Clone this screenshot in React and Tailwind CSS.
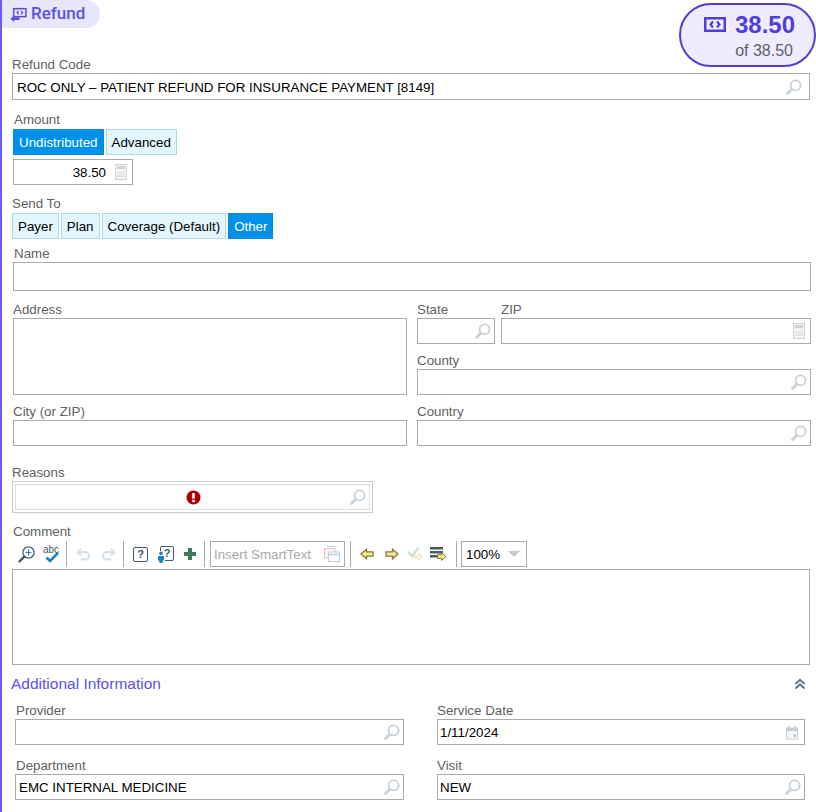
const SearchIcon = () => (
  <svg width="16" height="16" viewBox="0 0 16 16" fill="none" className="shrink-0">
    <circle cx="9.6" cy="6.4" r="5" stroke="#c9d1d8" strokeWidth="1.8" />
    <path d="M5.8 10.2 L1.6 14.4" stroke="#c9d1d8" strokeWidth="2.8" strokeLinecap="round" />
  </svg>
)

const CalcIcon = () => (
  <svg width="12" height="16" viewBox="0 0 12 16" className="shrink-0">
    <rect x="0.5" y="0.5" width="11" height="15" fill="#f4f5f6" stroke="#cfd3d6" />
    <rect x="2" y="2" width="8" height="3" fill="#cfd3d6" />
    <path d="M2.5 8.5h7M2.5 10.5h7M2.5 12.5h7" stroke="#c2c7cb" strokeDasharray="1 1" />
  </svg>
)

const CalendarIcon = () => (
  <svg width="14" height="15" viewBox="0 0 14 15" className="shrink-0">
    <rect x="1.5" y="3" width="11" height="11" fill="#f4f6f7" stroke="#c6cfd6" />
    <rect x="1" y="3" width="12" height="3" fill="#c6cfd6" />
    <rect x="3" y="1" width="1.5" height="2" fill="#c6cfd6" />
    <rect x="9.5" y="1" width="1.5" height="2" fill="#c6cfd6" />
    <rect x="8.5" y="9.5" width="2.5" height="2.5" fill="#b3bec7" />
  </svg>
)

const Label = ({ className = '', children }) => (
  <div className={`-mb-px pt-px text-[13.33px] leading-4 text-[#616161] ${className}`}>{children}</div>
)

const Input = ({ value, icon, className = '' }) => (
  <div className={`flex h-[27px] items-center justify-between border border-[#aaaaaa] bg-white pl-[3px] pr-[7px] text-[13.33px] text-black ${className}`}>
    <span className="pt-[2px]">{value}</span>
    {icon === 'search' && <SearchIcon />}
    {icon === 'calc' && <CalcIcon />}
    {icon === 'date' && <CalendarIcon />}
  </div>
)

const Toggle = ({ active, children }) => (
  <div
    className={`flex h-[26px] items-center border px-[5px] pt-px text-[13.33px] ${
      active ? 'border-[#0a86d8] bg-[#0091ea] text-white' : 'border-[#acd9ea] bg-[#e3f6fd] text-black'
    }`}
  >
    {children}
  </div>
)

const Sep = () => <div className="h-[26px] w-px shrink-0 bg-[#aaaaaa]" />

const RefundIcon = () => (
  <svg width="17" height="17" viewBox="0 0 16 16" className="shrink-0">
    <rect x="3.5" y="2.5" width="11.5" height="7.5" fill="none" stroke="#5a47e0" strokeWidth="1.4" />
    <path d="M8 4.5 L6.7 6.2 L8 8 M10.5 4.5 L11.8 6.2 L10.5 8" fill="none" stroke="#5a47e0" strokeWidth="1.2" />
    <path d="M0.5 12 L4 9 V10.8 H9 V13.2 H4 V15 Z" fill="#5a47e0" />
  </svg>
)

const MoneyIcon = () => (
  <svg width="22" height="15" viewBox="0 0 22 15" className="shrink-0">
    <path fillRule="evenodd" d="M0 0H22V15H0Z M2.5 2.5V12.5H19.5V2.5Z" fill="#4f3fd9" />
    <path d="M9 4.5 L6.5 7.5 L9 10.5 M13 4.5 L15.5 7.5 L13 10.5" fill="none" stroke="#4f3fd9" strokeWidth="2.2" />
  </svg>
)

const ZoomPlus = () => (
  <svg width="18" height="18" viewBox="0 0 18 18" fill="none">
    <circle cx="10.5" cy="7.5" r="5.6" stroke="#44596b" strokeWidth="1.3" />
    <path d="M10.5 4.6v5.8M7.6 7.5h5.8" stroke="#1f7fb8" strokeWidth="1.2" />
    <path d="M6.3 11.7 L1.6 16.4" stroke="#44596b" strokeWidth="2.4" strokeLinecap="round" />
  </svg>
)

const SpellCheck = () => (
  <div className="relative h-[18px] w-[16px]">
    <span className="absolute -top-px left-0 text-[10px] leading-[11px] text-[#44596b]">abc</span>
    <svg width="16" height="18" viewBox="0 0 16 18" fill="none" className="absolute left-0 top-0">
      <path d="M3.5 12.5 L7 16 L15 8" stroke="#1f7fb8" strokeWidth="2.6" />
    </svg>
  </div>
)

const Undo = ({ flip }) => (
  <svg width="16" height="14" viewBox="0 0 16 14" fill="none" className={flip ? '-scale-x-100' : ''}>
    <path d="M5 2 L1.8 5.2 L5 8.4" stroke="#d3e2eb" strokeWidth="2.2" />
    <path d="M2.5 5.2 H9.5 A3.6 3.6 0 0 1 9.5 12.4 H5" stroke="#d3e2eb" strokeWidth="2.2" />
  </svg>
)

const HelpBox = () => (
  <div className="flex h-[15px] w-[15px] items-center justify-center rounded-[2px] border border-[#44596b] text-[11px] font-bold leading-none text-[#44596b]">?</div>
)

const PersonHelp = () => (
  <div className="relative h-[16px] w-[17px]">
    <div className="absolute right-0 top-0 flex h-[15px] w-[14px] items-center justify-center rounded-[2px] border border-[#44596b] text-[11px] font-bold leading-none text-[#44596b]">?</div>
    <svg width="8" height="12" viewBox="0 0 8 12" className="absolute bottom-[-1px] left-0">
      <rect x="0" y="0" width="8" height="12" fill="white" />
      <circle cx="4" cy="2.4" r="1.8" fill="#1f7fb8" />
      <path d="M1 5H7V9.5H5.6V12H2.4V9.5H1Z" fill="#1f7fb8" />
    </svg>
  </div>
)

const Plus = () => (
  <svg width="14" height="14" viewBox="0 0 14 14">
    <path d="M5 1H9V5H13V9H9V13H5V9H1V5H5Z" fill="#3a7d5a" />
  </svg>
)

const ArrowLeft = () => (
  <svg width="14" height="12" viewBox="0 0 14 12">
    <path d="M1 6 L6.5 1.2 V3.8 H13 V8.2 H6.5 V10.8 Z" fill="#f5e9a8" stroke="#8f7a1e" strokeWidth="1.3" />
  </svg>
)

const ArrowRight = () => (
  <svg width="14" height="12" viewBox="0 0 14 12">
    <path d="M13 6 L7.5 1.2 V3.8 H1 V8.2 H7.5 V10.8 Z" fill="#f5e9a8" stroke="#8f7a1e" strokeWidth="1.3" />
  </svg>
)

const CheckArrow = () => (
  <svg width="17" height="16" viewBox="0 0 17 16" fill="none">
    <path d="M1 6 L5 10 L11.5 1.5" stroke="#cfe3da" strokeWidth="2.6" />
    <path d="M15.5 10.5 L11.5 7.5 V9.2 H7 V12 H11.5 V14 Z" fill="#faf7e6" stroke="#e6e0bd" />
  </svg>
)

const ListArrow = () => (
  <svg width="17" height="16" viewBox="0 0 17 16">
    <path d="M0 1H13V3.4H0ZM0 5H13V7.4H0ZM0 9H7V11.4H0Z" fill="#44596b" />
    <path d="M16 10.5 L11.5 6.8 V8.6 H7.5 V12.4 H11.5 V14.4 Z" fill="#f5e9a8" stroke="#8f7a1e" />
  </svg>
)

const SmartTextIcon = () => (
  <svg width="16" height="16" viewBox="0 0 16 16" fill="none">
    <rect x="0.5" y="2.5" width="10.5" height="9" fill="#fdf3f2" stroke="#e3c5c0" />
    <path d="M3 0.5H13" stroke="#bfd8c8" />
    <rect x="4.5" y="6" width="11" height="9.5" fill="white" stroke="#b7d2e6" />
    <path d="M4.5 8.5H15.5" stroke="#b7d2e6" strokeWidth="1.5" />
  </svg>
)

export default function App() {
  return (
    <div className="relative h-[812px] w-[816px] overflow-hidden border-l-2 border-[#6a5cff] bg-white font-['Liberation_Sans',sans-serif]">
      {/* Title */}
      <div className="flex h-[28px] w-[98px] items-center gap-[4px] rounded-r-full bg-[#e8e6fa] pl-[8px] font-['Roboto',sans-serif] text-[17px] font-medium text-[#5f50e6]">
        <RefundIcon />
        Refund
      </div>

      {/* Balance badge */}
      <div className="absolute left-[677px] top-[3px] flex h-[64px] w-[137px] flex-col items-end rounded-full border-2 border-[#4f3fd9] bg-[#eeecfe] pr-[19px] pt-[5px]">
        <div className="flex items-center gap-[9px] text-[24px] font-bold leading-[29px] text-[#4f3fd9]">
          <MoneyIcon />
          38.50
        </div>
        <div className="mr-[2px] mt-[4px] text-base leading-4 text-[#616161]">of 38.50</div>
      </div>

      {/* Refund code */}
      <Label className="ml-[10px] mt-[28px]">Refund Code</Label>
      <Input
        className="ml-[10px] mt-[1px] w-[798px] !pl-[4px]"
        value="ROC ONLY – PATIENT REFUND FOR INSURANCE PAYMENT [8149]"
        icon="search"
      />

      {/* Amount */}
      <Label className="ml-[12px] mt-[11px]">Amount</Label>
      <div className="ml-[11px] mt-[2px] flex gap-[2px]">
        <Toggle active>Undistributed</Toggle>
        <Toggle>Advanced</Toggle>
      </div>
      <div className="ml-[11px] mt-[4px] flex h-[26px] w-[120px] items-center justify-end gap-[9px] border border-[#aaaaaa] pr-[5px] text-[13.33px] text-black">
        <span className="pt-px">38.50</span>
        <CalcIcon />
      </div>

      {/* Send to */}
      <Label className="ml-[10px] mt-[10px]">Send To</Label>
      <div className="ml-[10px] mt-[2px] flex gap-[2px]">
        <Toggle>Payer</Toggle>
        <Toggle>Plan</Toggle>
        <Toggle>Coverage (Default)</Toggle>
        <Toggle active>Other</Toggle>
      </div>

      {/* Name */}
      <Label className="ml-[12px] mt-[6px]">Name</Label>
      <Input className="ml-[11px] mt-[1px] !h-[29px] w-[798px]" />

      {/* Address block */}
      <div className="ml-[11px] mt-[10px] grid w-[798px] grid-cols-[394px_394px] gap-x-[10px]">
        <div>
          <Label>Address</Label>
          <div className="mt-[1px] h-[77px] border border-[#aaaaaa]" />
          <Label className="mt-[8px]">City (or ZIP)</Label>
          <Input className="mt-[1px] !h-[26px]" />
        </div>
        <div>
          <div className="flex gap-[6px]">
            <div className="w-[78px]">
              <Label>State</Label>
              <Input className="mt-[1px] !h-[26px] !pr-[3px]" icon="search" />
            </div>
            <div className="flex-1">
              <Label>ZIP</Label>
              <Input className="mt-[1px] !h-[26px] !pr-[5px]" icon="calc" />
            </div>
          </div>
          <Label className="mt-[8px]">County</Label>
          <Input className="mt-[1px] !h-[26px] !pr-[3px]" icon="search" />
          <Label className="mt-[8px]">Country</Label>
          <Input className="mt-[1px] !h-[26px] !pr-[3px]" icon="search" />
        </div>
      </div>

      {/* Reasons */}
      <Label className="ml-[10px] mt-[18px]">Reasons</Label>
      <div className="ml-[10px] mt-[1px] h-[32px] w-[361px] border border-[#cccccc] p-[2px]">
        <div className="relative flex h-full items-center justify-end border border-[#dddddd] pr-[3px]">
          <svg width="15" height="15" viewBox="0 0 15 15" className="absolute left-[170px] top-[5px]">
            <circle cx="7.5" cy="7.5" r="7" fill="#a80000" />
            <rect x="6.2" y="3" width="2.6" height="5.6" fill="white" />
            <rect x="6.2" y="9.8" width="2.6" height="2.4" fill="white" />
          </svg>
          <SearchIcon />
        </div>
      </div>

      {/* Comment */}
      <Label className="ml-[11px] mt-[10px]">Comment</Label>
      <div className="ml-[10px] mt-[2px] flex h-[26px] items-center">
        <div className="flex items-center gap-[7px] pl-[6px] pr-[7px]">
          <ZoomPlus />
          <SpellCheck />
        </div>
        <Sep />
        <div className="flex items-center gap-[8px] pl-[9px] pr-[7px]">
          <Undo />
          <Undo flip />
        </div>
        <Sep />
        <div className="flex items-center gap-[9px] pl-[9px] pr-[7px]">
          <HelpBox />
          <PersonHelp />
          <Plus />
        </div>
        <Sep />
        <div className="mx-[5px] flex h-[26px] w-[135px] shrink-0 items-center justify-between border border-[#aaaaaa] pl-[3px] pr-[4px] text-[13.33px] text-[#a8a8a8]">
          <span className="pt-px">Insert SmartText</span>
          <SmartTextIcon />
        </div>
        <Sep />
        <div className="flex items-center pl-[9px] pr-[9px]">
          <ArrowLeft />
          <div className="ml-[11px]"><ArrowRight /></div>
          <div className="ml-[8px]"><CheckArrow /></div>
          <div className="ml-[6px]"><ListArrow /></div>
        </div>
        <Sep />
        <div className="ml-[4px] flex h-[26px] w-[66px] items-center justify-between border border-[#aaaaaa] pl-[4px] pr-[6px] text-[13.33px] text-black">
          <span className="pt-px">100%</span>
          <div className="h-0 w-0 border-x-[6px] border-t-[6px] border-x-transparent border-t-[#c4cbd1]" />
        </div>
      </div>
      <div className="ml-[10px] mt-[2px] h-[96px] w-[798px] border border-[#aaaaaa]" />

      {/* Additional information */}
      <div className="ml-[9px] mt-[10px] flex w-[795px] items-center justify-between">
        <div className="text-[15.5px] leading-[18px] text-[#5f50e6]">Additional Information</div>
        <svg width="12" height="12" viewBox="0 0 12 12" fill="none">
          <path d="M1.5 6 L6 1.8 L10.5 6 M1.5 10.5 L6 6.3 L10.5 10.5" stroke="#5b7083" strokeWidth="1.8" />
        </svg>
      </div>
      <div className="ml-[13px] mt-[9px] grid w-[790px] grid-cols-[389px_368px] gap-x-[33px] gap-y-[12px]">
        <div>
          <Label className="ml-px">Provider</Label>
          <Input className="mt-[1px] !h-[26px] !pr-[3px]" icon="search" />
        </div>
        <div>
          <Label>Service Date</Label>
          <Input className="mt-[1px] !h-[26px] !pl-[2px] !pr-[5px]" value="1/11/2024" icon="date" />
        </div>
        <div>
          <Label className="ml-px">Department</Label>
          <Input className="mt-[1px] !h-[26px] !pr-[3px]" value="EMC INTERNAL MEDICINE" icon="search" />
        </div>
        <div>
          <Label>Visit</Label>
          <Input className="mt-[1px] !h-[26px] !pl-[2px] !pr-[3px]" value="NEW" icon="search" />
        </div>
      </div>
    </div>
  )
}
